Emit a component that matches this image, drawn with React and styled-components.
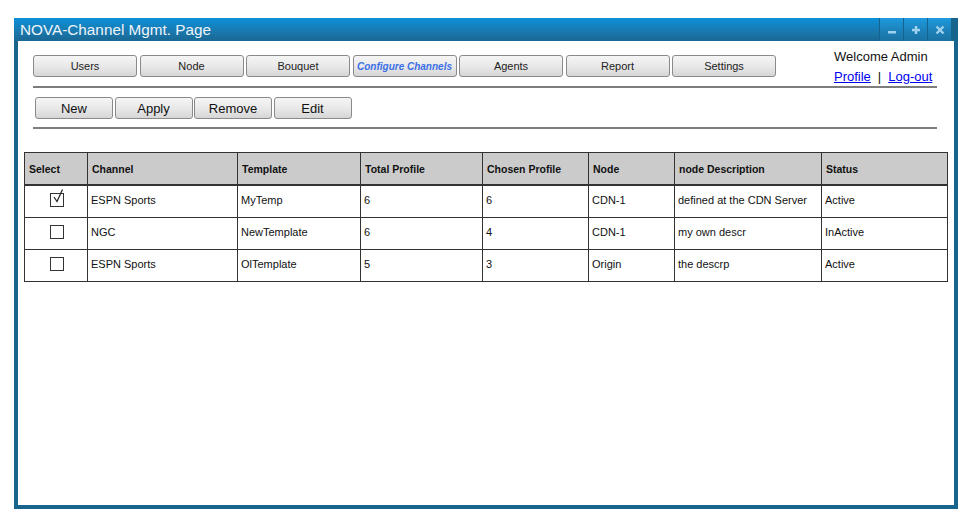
import styled, { createGlobalStyle } from 'styled-components';

const GlobalStyle = createGlobalStyle`
  body {
    margin: 0;
    background: #ffffff;
    font-family: 'Liberation Sans', Arial, sans-serif;
  }
`;

const navItems = ['Users', 'Node', 'Bouquet', 'Configure Channels', 'Agents', 'Report', 'Settings'];
const actions = ['New', 'Apply', 'Remove', 'Edit'];

const columns = [
  { label: 'Select', width: 63 },
  { label: 'Channel', width: 150 },
  { label: 'Template', width: 123 },
  { label: 'Total Profile', width: 122 },
  { label: 'Chosen Profile', width: 106 },
  { label: 'Node', width: 86 },
  { label: 'node Description', width: 147 },
  { label: 'Status', width: 126 },
];

const rows = [
  { checked: true, channel: 'ESPN Sports', template: 'MyTemp', total: '6', chosen: '6', node: 'CDN-1', desc: 'defined at the CDN Server', status: 'Active' },
  { checked: false, channel: 'NGC', template: 'NewTemplate', total: '6', chosen: '4', node: 'CDN-1', desc: 'my own descr', status: 'InActive' },
  { checked: false, channel: 'ESPN Sports', template: 'OlTemplate', total: '5', chosen: '3', node: 'Origin', desc: 'the descrp', status: 'Active' },
];

export default function App() {
  return (
    <Page>
      <GlobalStyle />
      <Window>
        <TitleBar>
          <Title>NOVA-Channel Mgmt. Page</Title>
          <Controls>
            <ControlButton>
              <svg width="10" height="10" viewBox="0 0 10 10">
                <rect x="1" y="6" width="8" height="2.5" fill="#9fd2ee" />
              </svg>
            </ControlButton>
            <ControlButton>
              <svg width="10" height="10" viewBox="0 0 10 10">
                <rect x="1" y="3.8" width="8" height="2.5" fill="#9fd2ee" />
                <rect x="3.8" y="1" width="2.5" height="8" fill="#9fd2ee" />
              </svg>
            </ControlButton>
            <ControlButton>
              <svg width="10" height="10" viewBox="0 0 10 10">
                <path d="M1.5 1.5 L8.5 8.5 M8.5 1.5 L1.5 8.5" stroke="#9fd2ee" strokeWidth="2.4" />
              </svg>
            </ControlButton>
          </Controls>
        </TitleBar>
        <Content>
          <TopRow>
            <NavGroup>
              {navItems.map((item) => (
                <NavButton key={item} active={item === 'Configure Channels'}>
                  {item}
                </NavButton>
              ))}
            </NavGroup>
            <UserBlock>
              <div>Welcome Admin</div>
              <div>
                <UserLink href="#">Profile</UserLink>
                <Separator>|</Separator>
                <UserLink href="#">Log-out</UserLink>
              </div>
            </UserBlock>
          </TopRow>
          <Divider />
          <ActionRow>
            {actions.map((item) => (
              <ActionButton key={item}>{item}</ActionButton>
            ))}
          </ActionRow>
          <Divider />
          <Table>
            <colgroup>
              {columns.map((c) => (
                <col key={c.label} style={{ width: c.width }} />
              ))}
            </colgroup>
            <thead>
              <tr>
                {columns.map((c) => (
                  <HeadCell key={c.label}>{c.label}</HeadCell>
                ))}
              </tr>
            </thead>
            <tbody>
              {rows.map((r, i) => (
                <tr key={i}>
                  <CheckCell>
                    <CheckBox>
                      {r.checked && (
                        <CheckMark width="12" height="16" viewBox="0 0 12 16">
                          <path d="M2 8 L5 12.5 L10.5 0.5" fill="none" stroke="#222" strokeWidth="1.2" />
                        </CheckMark>
                      )}
                    </CheckBox>
                  </CheckCell>
                  <Cell>{r.channel}</Cell>
                  <Cell>{r.template}</Cell>
                  <Cell>{r.total}</Cell>
                  <Cell>{r.chosen}</Cell>
                  <Cell>{r.node}</Cell>
                  <Cell>{r.desc}</Cell>
                  <Cell>{r.status}</Cell>
                </tr>
              ))}
            </tbody>
          </Table>
        </Content>
      </Window>
    </Page>
  );
}

const Page = styled.div`
  padding: 18px 0 0 14px;
`;

const Window = styled.div`
  width: 944px;
  height: 491px;
  box-sizing: border-box;
  border: 4px solid #17658d;
  border-top: none;
  background: #ffffff;
  display: flex;
  flex-direction: column;
`;

const TitleBar = styled.div`
  height: 23px;
  margin: 0 -4px 0 -4px;
  padding-left: 6px;
  background: linear-gradient(#0c90da, #1a78ad 60%, #196894);
  display: flex;
  align-items: center;
  justify-content: space-between;
`;

const Title = styled.div`
  color: #eef4fb;
  font-size: 15.3px;
  line-height: 23px;
`;

const Controls = styled.div`
  display: flex;
  height: 23px;
  border-right: 7px solid #17658d;
`;

const ControlButton = styled.div`
  width: 23px;
  height: 23px;
  border-left: 1px solid #14628f;
  background: linear-gradient(#1f9ade, #1c7fb6 60%, #1a72a3);
  display: flex;
  align-items: center;
  justify-content: center;
`;

const Content = styled.div`
  padding: 14px 17px 0 15px;
`;

const TopRow = styled.div`
  display: flex;
  justify-content: space-between;
  height: 31px;
`;

const NavGroup = styled.div`
  display: flex;
  gap: 2.5px;
  height: 22px;
`;

const NavButton = styled.div`
  width: 104px;
  height: 22px;
  box-sizing: border-box;
  border: 1px solid #8a8a8a;
  border-radius: 3px;
  background: linear-gradient(#f5f5f5, #e9e9e9 50%, #d6d6d6);
  display: flex;
  align-items: center;
  justify-content: center;
  font-size: ${({ active }) => (active ? '10px' : '11px')};
  font-style: ${({ active }) => (active ? 'italic' : 'normal')};
  font-weight: ${({ active }) => (active ? 'bold' : 'normal')};
  color: ${({ active }) => (active ? '#3b6fe6' : '#222222')};
  white-space: nowrap;
`;

const UserBlock = styled.div`
  width: 103px;
  margin-top: -8px;
  font-size: 13px;
  line-height: 20px;
  color: #111111;
`;

const UserLink = styled.a`
  color: #0000ee;
  text-decoration: underline;
`;

const Separator = styled.span`
  margin: 0 7px;
`;

const Divider = styled.div`
  border-top: 2px solid #7d7d7d;
`;

const ActionRow = styled.div`
  display: flex;
  gap: 1.5px;
  padding: 9px 0 8px 2px;
`;

const ActionButton = styled.div`
  width: 78px;
  height: 22px;
  box-sizing: border-box;
  border: 1px solid #8a8a8a;
  border-radius: 3px;
  background: linear-gradient(#f5f5f5, #e9e9e9 50%, #d6d6d6);
  display: flex;
  align-items: center;
  justify-content: center;
  font-size: 13px;
  color: #111111;
`;

const Table = styled.table`
  margin: 23px 0 0 -9px;
  width: 923px;
  border-collapse: collapse;
  table-layout: fixed;
  border: 1px solid #2a2a2a;
  font-size: 11px;
  color: #111111;
`;

const HeadCell = styled.th`
  height: 31px;
  padding: 0 4px;
  background: #cbcbcb;
  border: 1px solid #333333;
  border-bottom: 2px solid #333333;
  text-align: left;
  font-weight: bold;
  font-size: 10.5px;
`;

const Cell = styled.td`
  height: 27px;
  padding: 0 3px 4px;
  border: 1px solid #333333;
  white-space: nowrap;
  overflow: hidden;
`;

const CheckCell = styled(Cell)`
  text-align: center;
  padding: 0 0 3px 1px;
`;

const CheckBox = styled.span`
  position: relative;
  display: inline-block;
  width: 12px;
  height: 12px;
  border: 1px solid #333333;
  vertical-align: middle;
`;

const CheckMark = styled.svg`
  position: absolute;
  left: 1px;
  top: -5px;
`;
